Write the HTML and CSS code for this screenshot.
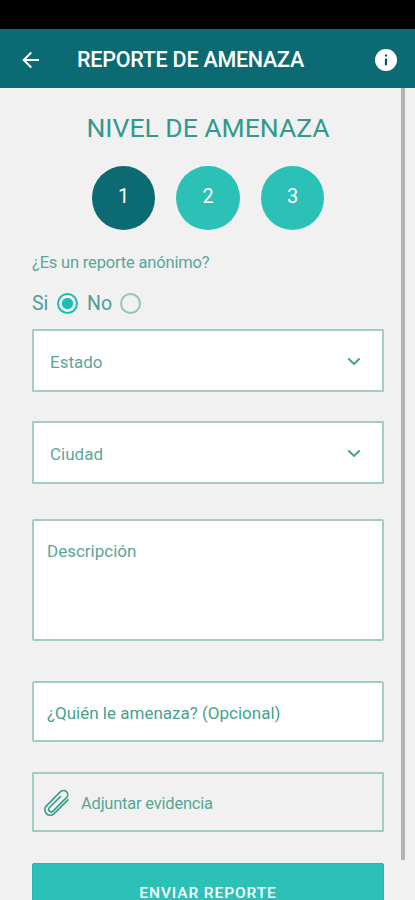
FILE: index.html
```html
<!DOCTYPE html>
<html lang="es">
<head>
<meta charset="utf-8">
<title>Reporte de amenaza</title>
<link rel="stylesheet" href="styles.css">
</head>
<body>
<div class="status-bar"></div>
<header class="app-bar">
  <svg class="back" viewBox="0 0 18 18"><path d="M17 9H2M9.3 1.5 1.7 9l7.6 7.5"/></svg>
  <h1 class="app-title">REPORTE DE AMENAZA</h1>
  <svg class="info" viewBox="0 0 22 22"><circle cx="11" cy="11" r="11"/><path d="M9.9 5.4h2.2v2.2H9.9zM9.9 9.4h2.2v6.8H9.9z"/></svg>
</header>
<main class="content">
  <h2 class="heading"><span>NIVEL DE AMENAZA</span></h2>
  <div class="levels">
    <span class="level active">1</span>
    <span class="level">2</span>
    <span class="level">3</span>
  </div>
  <p class="question"><span>¿Es un reporte anónimo?</span></p>
  <div class="options">
    <span class="si">Si</span><i class="radio checked"></i>
    <span class="no">No</span><i class="radio"></i>
  </div>
  <div class="field select estado"><span>Estado</span><svg class="chevron" viewBox="0 0 14 9"><path d="m1.3 1.5 5.7 5.4 5.7-5.4"/></svg></div>
  <div class="field select ciudad"><span>Ciudad</span><svg class="chevron" viewBox="0 0 14 9"><path d="m1.3 1.5 5.7 5.4 5.7-5.4"/></svg></div>
  <div class="field description"><span>Descripción</span></div>
  <div class="field who"><span>¿Quién le amenaza? (Opcional)</span></div>
  <div class="field attach">
    <svg class="clip" viewBox="0 0 26 28"><path transform="translate(13 14) rotate(45)" d="M5.500-10V9.500a5.500 5.500 0 0 1-11 0V-10.500a4.200 4.200 0 0 1 8.400 0V8.500a2.500 2.500 0 0 1-5 0V-7"/></svg>
    <span>Adjuntar evidencia</span>
  </div>
  <div class="submit"><span>ENVIAR REPORTE</span></div>
  <div class="scrollbar"></div>
</main>
</body>
</html>
```
FILE: styles.css
```css
* { box-sizing: border-box; }
body {
  margin: 0;
  height: 900px;
  overflow: hidden;
  background: #f1f1f1;
  color: #5aa698;
  font-family: Roboto, sans-serif;
  display: flex;
  flex-direction: column;
}
svg { display: block; flex: none; fill: none; }
.status-bar { flex: none; height: 29px; background: #000; }
.app-bar {
  flex: none;
  height: 59px;
  padding: 2px 18px 0 22px;
  background: #0c6a72;
  display: flex;
  align-items: center;
}
.back { width: 18px; height: 18px; stroke: #fff; stroke-width: 2; }
.app-title {
  margin: 0 auto 0 37px;
  padding-top: 1px;
  color: #fff;
  font-size: 21.5px;
  font-weight: 500;
  letter-spacing: -0.25px;
  line-height: 28px;
  white-space: nowrap;
}
.info { width: 22px; height: 22px; }
.info circle { fill: #fff; }
.info path { fill: #0c5059; }
.content {
  position: relative;
  flex: 1;
  min-height: 0;
  padding: 0 31px 0 32px;
  display: flex;
  flex-direction: column;
}
.content > * { flex: none; }
.heading {
  margin: 24px 0 0;
  color: #31998e;
  font-size: 26.5px;
  font-weight: 400;
  line-height: 32px;
  text-align: center;
  white-space: nowrap;
}
.levels { display: flex; justify-content: center; gap: 21px; margin-top: 22px; }
.level {
  width: 63.5px;
  height: 64px;
  padding-bottom: 4px;
  border-radius: 50%;
  background: #2bc1b6;
  color: #fff;
  font-size: 20px;
  display: flex;
  align-items: center;
  justify-content: center;
}
.level.active { background: #0c6a72; }
.question { margin: 23px 0 0; font-size: 16.5px; letter-spacing: -0.18px; line-height: 20px; }
.options {
  display: flex;
  align-items: center;
  height: 24px;
  margin-top: 18px;
  font-size: 19.5px;
  color: #4d9f93;
}
.radio { width: 21px; height: 21px; border: 2px solid #93c6bb; border-radius: 50%; }
.si { width: 25px; }
.no { width: 33px; margin-left: 9px; }
.radio.checked { border-color: #1fbcb1; background: radial-gradient(circle, #1fbcb1 5.2px, transparent 5.9px); }
.field {
  width: 352px;
  border: 2px solid #a3cdc3;
  background: #fff;
  border-radius: 1px;
  font-size: 17px;
  display: flex;
  align-items: center;
}
.select { height: 63px; padding: 2px 21px 0 16px; justify-content: space-between; }
.estado { margin-top: 14px; }
.ciudad { margin-top: 29px; }
.chevron { width: 14px; height: 9px; stroke: #459f93; stroke-width: 2; margin-bottom: 1px; }
.description { height: 122px; margin-top: 35px; padding: 20px 13px; align-items: flex-start; border-radius: 2px; }
.who { height: 61px; margin-top: 40px; padding: 3px 13px 0; color: #489f92; border-radius: 2px; }
.attach { height: 60px; margin-top: 30px; padding: 2px 10px 0; background: transparent; font-size: 16.5px; letter-spacing: -0.22px; }
.clip { width: 26px; height: 28px; stroke: #3c9b8e; stroke-width: 1.6; stroke-linecap: round; margin-right: 11px; }
.submit {
  width: 352px;
  height: 60px;
  margin-top: 31px;
  background: #2bc1b6;
  border: 1px solid #20b8ac;
  border-radius: 2px 2px 0 0;
  color: #fff;
  font-size: 15.5px;
  font-weight: 500;
  letter-spacing: 0.9px;
  display: flex;
  align-items: flex-start;
  justify-content: center;
  padding-top: 21px;
}
.submit span { height: 15px; line-height: 17px; }
.scrollbar { position: absolute; top: 0; left: 401px; width: 4px; height: 772px; background: #b2b2b2; }
```
